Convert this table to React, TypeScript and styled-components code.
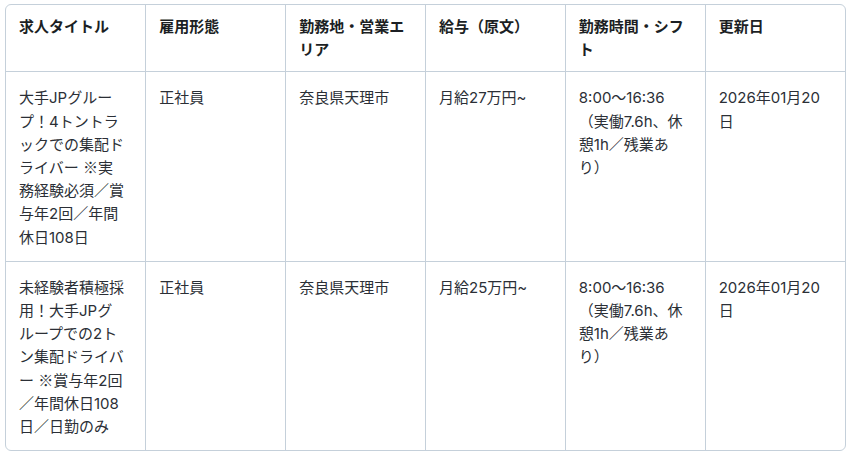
import React from "react";
import styled, { createGlobalStyle } from "styled-components";

const colors = {
  border: "#c5d0da",
  text: "#2b2f36",
  head: "#1c1f24",
  white: "white",
};

const GlobalStyle = createGlobalStyle`
  body {
    margin: 0;
    background: ${colors.white};
    font-family: Inter, "Noto Sans CJK JP", sans-serif;
  }
`;

const Page = styled.main`
  padding: 4px 6px 0 5px;
`;

const TableFrame = styled.div`
  border: 1px solid ${colors.border};
  border-radius: 6px;
  overflow: hidden;
`;

const Table = styled.table`
  width: 100%;
  border-collapse: collapse;
  table-layout: fixed;
  font-size: 15px;
  line-height: 23.2px;
  color: ${colors.text};
`;

const HeadCell = styled.th`
  text-align: left;
  vertical-align: top;
  font-weight: 700;
  color: ${colors.head};
  padding: 10px 19px 10px 13px;
  border-bottom: 1px solid ${colors.border};
  & + & {
    border-left: 1px solid ${colors.border};
  }
`;

const Row = styled.tr`
  & + & td {
    border-top: 1px solid ${colors.border};
  }
`;

const Cell = styled.td`
  vertical-align: top;
  padding: 14px 19px 12px 13px;
  & + & {
    border-left: 1px solid ${colors.border};
  }
`;

// the reference mark is the full-width CJK glyph, not Inter's
const Mark = styled.span`
  font-family: "Noto Sans CJK JP", sans-serif;
  line-height: 1;
`;

const withMarks = (text: string) =>
  text.split("※").map((part, i) => (
    <React.Fragment key={i}>
      {i > 0 && <Mark>※</Mark>}
      {part}
    </React.Fragment>
  ));

const headers = ["求人タイトル", "雇用形態", "勤務地・営業エリア", "給与（原文）", "勤務時間・シフト", "更新日"];

const jobs = [
  {
    title: "大手JPグループ！4トントラックでの集配ドライバー ※実務経験必須／賞与年2回／年間休日108日",
    type: "正社員",
    area: "奈良県天理市",
    salary: "月給27万円~",
    hours: "8:00〜16:36（実働7.6h、休憩1h／残業あり）",
    updated: "2026年01月20日",
  },
  {
    title: "未経験者積極採用！大手JPグループでの2トン集配ドライバー ※賞与年2回／年間休日108日／日勤のみ",
    type: "正社員",
    area: "奈良県天理市",
    salary: "月給25万円~",
    hours: "8:00〜16:36（実働7.6h、休憩1h／残業あり）",
    updated: "2026年01月20日",
  },
];

export default function App() {
  return (
    <Page>
      <GlobalStyle />
      <TableFrame>
        <Table>
          <thead>
            <tr>
              {headers.map((h) => (
                <HeadCell key={h}>{h}</HeadCell>
              ))}
            </tr>
          </thead>
          <tbody>
            {jobs.map((job) => (
              <Row key={job.title}>
                <Cell>{withMarks(job.title)}</Cell>
                <Cell>{job.type}</Cell>
                <Cell>{job.area}</Cell>
                <Cell>{job.salary}</Cell>
                <Cell>{job.hours}</Cell>
                <Cell>{job.updated}</Cell>
              </Row>
            ))}
          </tbody>
        </Table>
      </TableFrame>
    </Page>
  );
}
